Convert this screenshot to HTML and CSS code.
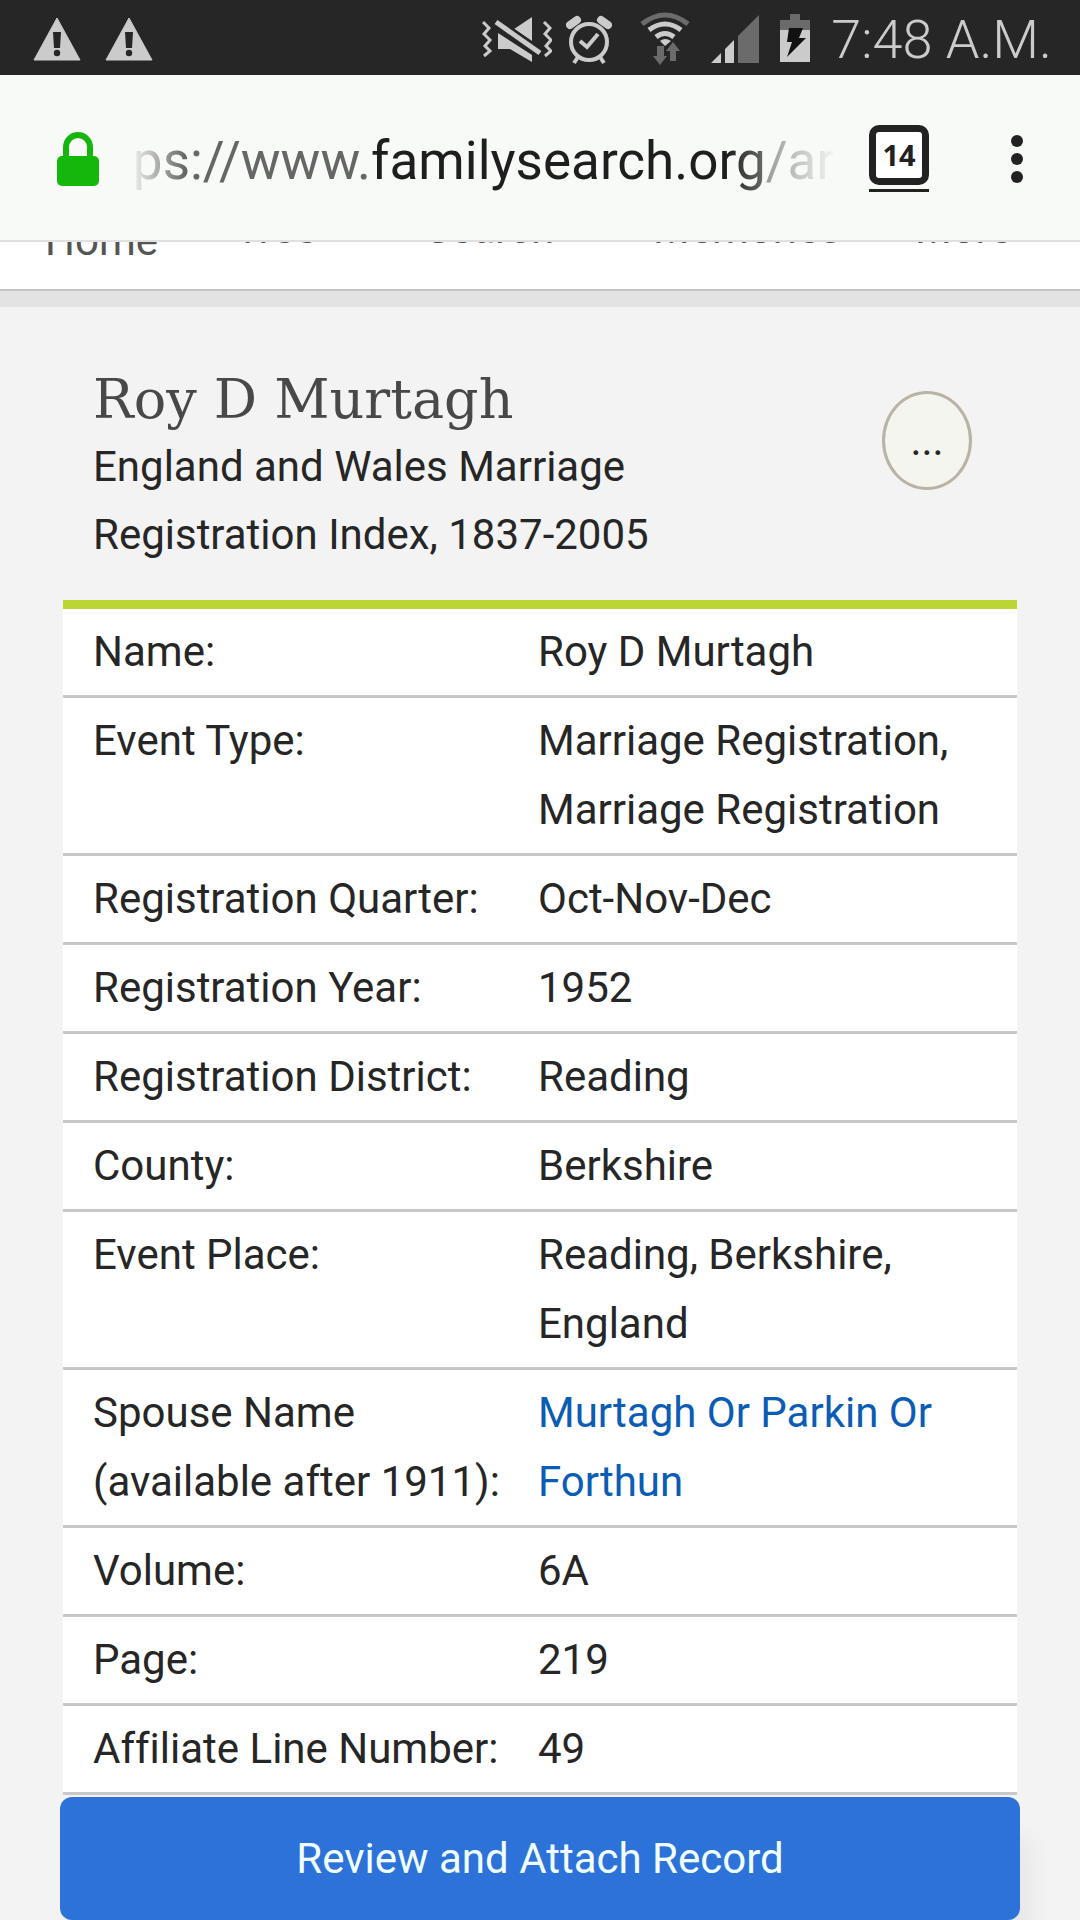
FILE: index.html
```html
<!DOCTYPE html>
<html lang="en">
<head>
<meta charset="utf-8">
<meta name="viewport" content="width=device-width, initial-scale=1">
<title>Roy D Murtagh</title>
<link rel="stylesheet" href="styles.css">
</head>
<body>
<div class="status">
  <div class="status-group notices">
    <svg width="48" height="44" viewBox="0 0 48 44" aria-hidden="true"><path d="M24 1L47 43H1Z" fill="#cbcbcb" stroke="#cbcbcb" stroke-linejoin="round"/><path d="M20 15h8l-1 16h-6z" fill="#262626"/><circle cx="24" cy="36" r="3.2" fill="#262626"/></svg>
    <svg width="48" height="44" viewBox="0 0 48 44" aria-hidden="true"><path d="M24 1L47 43H1Z" fill="#cbcbcb" stroke="#cbcbcb" stroke-linejoin="round"/><path d="M20 15h8l-1 16h-6z" fill="#262626"/><circle cx="24" cy="36" r="3.2" fill="#262626"/></svg>
  </div>
  <div class="status-group system">
    <div class="status-group alerts">
      <svg width="70" height="54" viewBox="482 10 70 54" aria-hidden="true"><g fill="none" stroke="#cbcbcb" stroke-width="3"><path d="M483 20l6 6-5 6 6 6-5 6 5 5-6 5M544 20l6 6-5 6 6 6-5 6 5 5-6 5"/></g><path d="M532 15v24l-18-12zM498 31l34 22v7l-22-13h-12z" fill="#cbcbcb"/><path d="M496 20l44 31" stroke="#262626" stroke-width="10"/><path d="M496 20l44 31" stroke="#cbcbcb" stroke-width="5"/></svg>
      <svg width="46" height="54" viewBox="566 10 46 54" aria-hidden="true"><g fill="none" stroke="#cbcbcb"><circle cx="589" cy="40" r="18" stroke-width="4"/><path d="M580 39l7 6 11-13" stroke-width="4"/><path d="M570 23l7-5M608 23l-7-5" stroke-width="8" stroke-linecap="round"/><path d="M578 55l-4 6M600 55l4 6" stroke-width="4"/></g></svg>
    </div>
    <svg width="50" height="54" viewBox="639 10 50 54" aria-hidden="true"><g fill="none" stroke-width="5"><path d="M641 22Q664 4 687 22" stroke="#6b6b6b"/><path d="M648 28Q664 16 680 28M655 35Q664 28 673 35" stroke="#cbcbcb"/></g><path d="M659 39q5-4 11 0l-6 5z" fill="#cbcbcb"/><path d="M656 44h7v10h3l-7 9-7-9h4zM669 59V49h-4l7-9 7 9h-4v10z" fill="#6b6b6b"/></svg>
    <svg width="48" height="54" viewBox="712 10 48 54" aria-hidden="true"><path d="M712 61l10-10v10zM726 61V47l9-9v23z" fill="#cbcbcb"/><path d="M739 61V34l21-21v48z" fill="#6b6b6b"/></svg>
    <svg width="30" height="54" viewBox="781 10 30 54" aria-hidden="true"><path d="M791 12h10v6h10v10h-30V18h10z" fill="#6b6b6b"/><path d="M781 28h30v32h-30z" fill="#cbcbcb"/><path d="M790 26h14l-4 10h7l-19 19 5-15h-5z" fill="#111"/></svg>
    <time class="clock" datetime="07:48">7:48 A.M.</time>
  </div>
</div>

<header class="toolbar">
  <svg class="lock" width="42" height="56" viewBox="0 0 42 56" aria-hidden="true"><path d="M9 28V16a12 12 0 0 1 24 0v12" fill="none" stroke="#15b50b" stroke-width="6"/><rect y="25" width="42" height="30" rx="5" fill="#13b80a"/></svg>
  <div class="address" role="textbox" aria-label="Address" tabindex="0">https://www.<span class="host">familysearch.org</span>/ark:</div>
  <button class="tabs" type="button" aria-label="14 open tabs"><span class="tabs-count">14</span></button>
  <button class="menu" type="button" aria-label="Menu"><svg width="12" height="48" viewBox="0 0 12 48"><g fill="#222"><circle cx="6" cy="6" r="6"/><circle cx="6" cy="24" r="6"/><circle cx="6" cy="42" r="6"/></g></svg></button>
</header>

<nav class="site-nav">
  <a class="current" href="#home">Home</a>
  <a href="#tree">Tree</a>
  <a href="#search">Search</a>
  <a href="#memories">Memories</a>
  <a href="#more">More</a>
</nav>

<main class="record">
  <div class="record-head">
    <div class="record-title">
      <h1>Roy D Murtagh</h1>
      <p>England and Wales Marriage Registration Index, 1837-2005</p>
    </div>
    <button class="more" type="button" aria-label="More options">...</button>
  </div>
  <table class="facts">
    <tr><th scope="row">Name:</th><td>Roy D Murtagh</td></tr>
    <tr><th scope="row">Event Type:</th><td>Marriage Registration, Marriage Registration</td></tr>
    <tr><th scope="row">Registration Quarter:</th><td>Oct-Nov-Dec</td></tr>
    <tr><th scope="row">Registration Year:</th><td>1952</td></tr>
    <tr><th scope="row">Registration District:</th><td>Reading</td></tr>
    <tr><th scope="row">County:</th><td>Berkshire</td></tr>
    <tr><th scope="row">Event Place:</th><td>Reading, Berkshire, England</td></tr>
    <tr><th scope="row">Spouse Name (available after 1911):</th><td><a href="#spouse">Murtagh Or Parkin Or Forthun</a></td></tr>
    <tr><th scope="row">Volume:</th><td>6A</td></tr>
    <tr><th scope="row">Page:</th><td>219</td></tr>
    <tr><th scope="row">Affiliate Line Number:</th><td>49</td></tr>
  </table>
  <button class="attach" type="button">Review and Attach Record</button>
</main>
</body>
</html>
```
FILE: styles.css
```css
* {
  box-sizing: border-box;
}

body {
  margin: 0;
  background: #f3f3f3;
  color: #262626;
  font-family: Roboto, "Liberation Sans", sans-serif;
  font-size: 42px;
  font-variant-ligatures: none;
  line-height: 69px;
}

button {
  padding: 0;
  border: 0;
  background: none;
  color: inherit;
  font: inherit;
}

svg {
  display: block;
  flex: none;
}

/* Phone status bar */
.status {
  display: flex;
  justify-content: space-between;
  height: 75px;
  padding: 2px 28px 0 33px;
  background: #262626;
  color: #cbcbcb;
}

.status-group {
  display: flex;
  align-items: center;
}

.notices {
  gap: 24px;
}

.system {
  gap: 21px;
}

.alerts {
  gap: 14px;
  margin-right: 7px;
}

.clock {
  padding-top: 2px;
  font-size: 54px;
  font-weight: 300;
  line-height: 64px;
  white-space: nowrap;
}

/* Browser toolbar */
.toolbar {
  display: flex;
  align-items: center;
  height: 167px;
  padding: 2px 57px 0;
  border-bottom: 2px solid #e0e0e0;
  background: #f8faf7;
}

.address {
  flex: 1;
  min-width: 0;
  margin: 0 32px 0 30px;
  padding-top: 4px;
  overflow: hidden;
  color: #666;
  font-size: 53px;
  line-height: 72px;
  text-indent: -60px;
  white-space: nowrap;
  -webkit-mask-image: linear-gradient(90deg, transparent, #000 56px, #000 calc(100% - 110px), transparent);
  mask-image: linear-gradient(90deg, transparent, #000 56px, #000 calc(100% - 110px), transparent);
}

.host {
  color: #1e1e1e;
}

.tabs {
  padding-bottom: 4px;
  border-bottom: 3px solid #222;
}

.tabs-count {
  display: block;
  width: 60px;
  height: 60px;
  border: 7px solid #222;
  border-radius: 10px;
  background: #fff;
  color: #222;
  font: bold 29px/46px "Open Sans", sans-serif;
  text-align: center;
}

.menu {
  margin-left: 82px;
}

/* Site navigation, partly scrolled under the toolbar */
.site-nav {
  display: grid;
  grid-template-columns: 190fr 190fr 228fr 262fr 165fr;
  grid-template-rows: 100%;
  align-items: end;
  height: 65px;
  padding: 0 0 30px 45px;
  overflow: hidden;
  border-bottom: 16px solid #e3e3e3;
  background: #fff;
  box-shadow: inset 0 -2px #c4c4c4;
  line-height: 40px;
}

.site-nav a {
  padding-bottom: 12px;
  color: #555;
  text-decoration: none;
}

.site-nav .current {
  padding-bottom: 0;
}

/* Record */
.record {
  padding: 56px 60px 0;
}

.record-head {
  display: flex;
  align-items: flex-start;
  justify-content: space-between;
  padding: 0 48px 31px 33px;
}

.record-title {
  flex: 1;
  max-width: 600px;
}

h1 {
  margin: 0;
  padding-top: 4px;
  color: #484848;
  font-family: "DejaVu Serif", serif;
  font-size: 54px;
  font-weight: 400;
  line-height: 66px;
}

p {
  margin: 0;
  line-height: 68px;
}

.more {
  width: 90px;
  height: 99px;
  margin-top: 28px;
  border: 3px solid #b8b3a5;
  border-radius: 50%;
  background: #f3f5ee;
}

.facts {
  width: calc(100% - 6px);
  margin: 0 3px 2px;
  border-top: 9px solid #bbd535;
  border-spacing: 0;
  background: #fff;
  table-layout: fixed;
}

.facts th,
.facts td {
  padding: 8px 29px 9px 0;
  border-bottom: 3px solid #c8c8c8;
  font-weight: 400;
  text-align: left;
  vertical-align: top;
}

.facts th {
  width: 475px;
  padding-left: 30px;
}

.facts a {
  color: #0a5cb4;
  text-decoration: none;
}

.attach {
  display: block;
  width: 100%;
  height: 123px;
  border-radius: 12px;
  background: #2d72d9;
  box-shadow: 12px 40px 24px rgba(0, 0, 0, 0.05);
  color: #f0ffff;
}
```
